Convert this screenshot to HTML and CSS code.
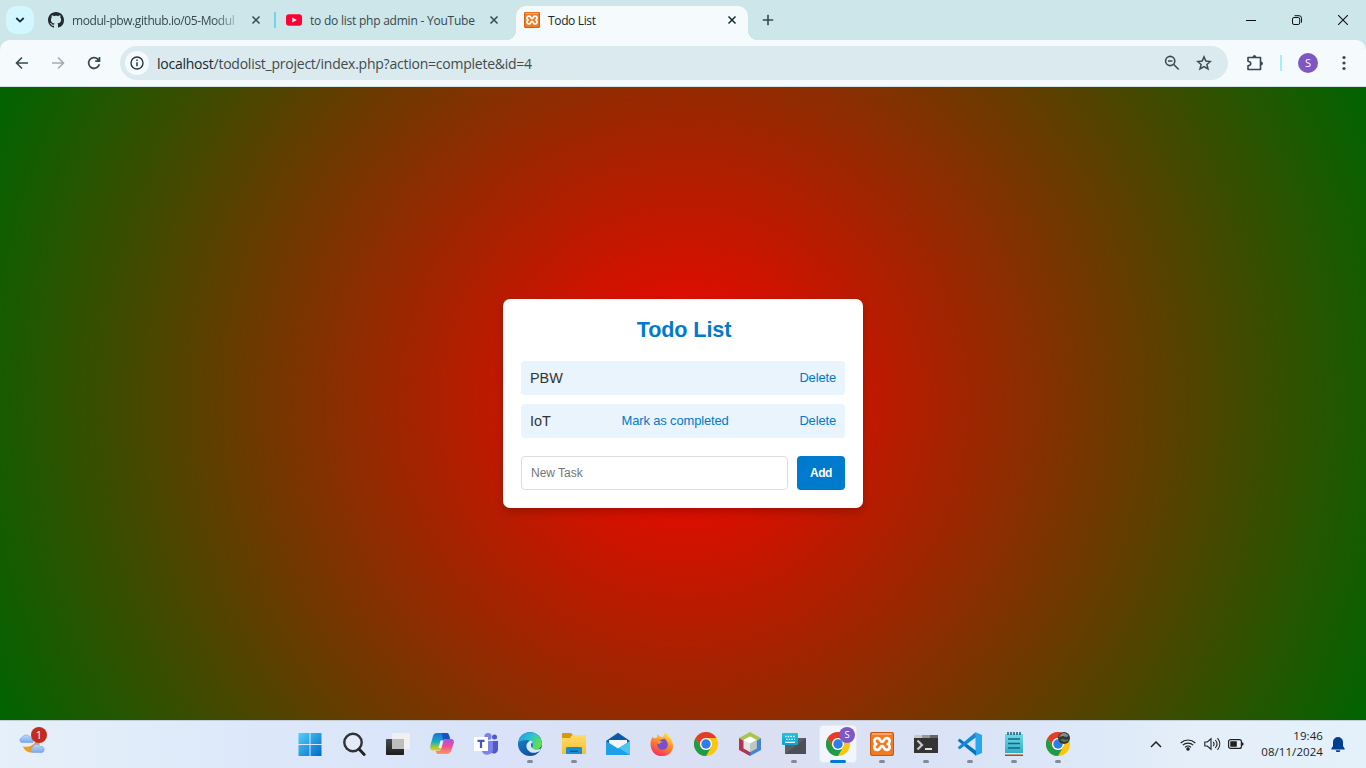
FILE: index.html
```html
<!DOCTYPE html>
<html lang="en">
<head>
<meta charset="utf-8">
<title>Todo List</title>
<link rel="stylesheet" href="styles.css">
</head>
<body>
<svg class="defs" width="0" height="0">
  <defs>
    <linearGradient id="win" x2="1" y2="1"><stop stop-color="#4fd0fb"/><stop offset="1" stop-color="#0069c8"/></linearGradient>
    <linearGradient id="edgeA" x2="1" y2=".4"><stop stop-color="#1b9de2"/><stop offset=".55" stop-color="#2bc3d2"/><stop offset="1" stop-color="#62df4b"/></linearGradient>
    <linearGradient id="edgeB" x2=".6" y2="1"><stop stop-color="#1d86d6"/><stop offset="1" stop-color="#0f4f9c"/></linearGradient>
    <linearGradient id="folder" x2="0" y2="1"><stop stop-color="#ffdc68"/><stop offset="1" stop-color="#f9bd30"/></linearGradient>
    <linearGradient id="fox" x1=".8" x2=".3" y2="1"><stop stop-color="#fff044"/><stop offset=".45" stop-color="#ff9128"/><stop offset="1" stop-color="#f52b62"/></linearGradient>
    <linearGradient id="copA" x2="0" y2="1"><stop stop-color="#1674de"/><stop offset=".5" stop-color="#19aac4"/><stop offset=".78" stop-color="#8fcb45"/><stop offset="1" stop-color="#f3c321"/></linearGradient>
    <linearGradient id="copB" x2="0" y2="1"><stop stop-color="#a650e5"/><stop offset=".5" stop-color="#ee5193"/><stop offset="1" stop-color="#ff9a5c"/></linearGradient>
    <linearGradient id="darkg" x2="0" y2="1"><stop stop-color="#4b4b4b"/><stop offset="1" stop-color="#1c1c1c"/></linearGradient>
    <linearGradient id="kb" x2="0" y2="1"><stop stop-color="#1fc4dc"/><stop offset="1" stop-color="#0aa2cf"/></linearGradient>
    <linearGradient id="cloud" x2="0" y2="1"><stop stop-color="#b9dcff"/><stop offset="1" stop-color="#7ba8ee"/></linearGradient>
    <linearGradient id="note" x2="0" y2="1"><stop stop-color="#6fd9e8"/><stop offset="1" stop-color="#31aecb"/></linearGradient>
    <symbol id="chrome" viewBox="0 0 24 24">
      <circle cx="12" cy="12" r="12" fill="#fdc50b"/>
      <path d="M1.600 6A12 12 0 0 1 22.400 6H12a6 6 0 0 0-5.200 9z" fill="#e33b2e"/>
      <path d="M1.600 6A12 12 0 0 0 12 24l5.200-9a6 6 0 0 1-10.400 0z" fill="#1f9a48"/>
      <circle cx="12" cy="12" r="6" fill="#fff"/><circle cx="12" cy="12" r="4.700" fill="#2b7cec"/>
    </symbol>
    <symbol id="xampp" viewBox="0 0 24 24">
      <rect width="24" height="24" rx="2.200" fill="#c9570f"/><rect x="1" y="1" width="22" height="22" rx="2" fill="#f27a20"/><path d="M2 1h20v2H2z" fill="#f7a566"/>
      <path d="M8.200 6.300C4.500 5.300 3 9.500 6 12c-3 2.500-1.500 6.700 2.200 5.700 2.200-.6 1.600-3.500 3.800-3.500s1.600 2.900 3.800 3.500C19.500 18.700 21 14.500 18 12c3-2.500 1.500-6.700-2.200-5.700-2.200.6-1.600 3.500-3.800 3.500s-1.600-2.900-3.800-3.500z" fill="none" stroke="#fff" stroke-width="2.700"/>
    </symbol>
    <symbol id="x" viewBox="0 0 10 10"><path d="M1.500 1.500l7 7M8.500 1.500l-7 7" stroke="currentColor" stroke-width="1.500"/></symbol>
  </defs>
</svg>

<div class="tabstrip">
  <div class="tabsearch"><svg width="10" height="6" viewBox="0 0 10 6"><path d="M1.300 1L5 4.600 8.700 1" fill="none" stroke="#15292e" stroke-width="1.800"/></svg></div>
  <div class="tab tab-github">
    <svg class="favicon" viewBox="0 0 16 16"><path fill="#1f2b30" d="M8 0C3.580 0 0 3.580 0 8c0 3.540 2.290 6.530 5.470 7.590.4.070.55-.17.55-.38 0-.19-.01-.82-.01-1.490-2.010.37-2.530-.49-2.690-.94-.09-.23-.48-.94-.82-1.130-.28-.15-.68-.52-.01-.53.63-.01 1.080.58 1.230.82.72 1.210 1.870.87 2.330.66.07-.52.28-.87.51-1.070-1.780-.2-3.640-.89-3.640-3.950 0-.87.31-1.590.82-2.150-.08-.2-.36-1.020.08-2.120 0 0 .67-.21 2.200.82.64-.18 1.320-.27 2-.27s1.360.09 2 .27c1.530-1.040 2.200-.82 2.200-.82.44 1.100.16 1.920.08 2.120.51.56.82 1.270.82 2.150 0 3.070-1.870 3.750-3.650 3.950.29.25.54.73.54 1.480 0 1.070-.01 1.930-.01 2.200 0 .21.15.46.55.38A8.010 8.010 0 0 0 16 8c0-4.420-3.580-8-8-8z"/></svg>
    <span class="tab-title t-github">modul-pbw.github.io/05-Modul</span>
    <svg class="close"><use href="#x"/></svg>
  </div>
  <div class="divider"></div>
  <div class="tab tab-youtube">
    <svg class="favicon" viewBox="0 0 16 16"><rect y="2.200" width="16" height="11.600" rx="3" fill="#ff0033"/><path d="M6.300 5.500v5L10.800 8z" fill="#fff"/></svg>
    <span class="tab-title t-youtube">to do list php admin - YouTube</span>
    <svg class="close"><use href="#x"/></svg>
  </div>
  <div class="tab tab-active">
    <svg class="favicon"><use href="#xampp"/></svg>
    <span class="tab-title t-active">Todo List</span>
    <svg class="close"><use href="#x"/></svg>
  </div>
  <svg class="newtab" viewBox="0 0 12 12"><path d="M6 .8v10.400M.8 6h10.400" stroke="#36494d" stroke-width="1.600"/></svg>
  <div class="winctl">
    <svg width="10" height="10"><path d="M0 5.500h10" stroke="#111"/></svg>
    <svg width="10" height="10" fill="none" stroke="#111"><rect x=".5" y="2.500" width="7.200" height="7" rx="1.500"/><path d="M2.500.7H7a2.500 2.500 0 0 1 2.500 2.500v4.500"/></svg>
    <svg width="10" height="10"><path d="M0 0l10 10M10 0L0 10" stroke="#111" stroke-width="1.100"/></svg>
  </div>
</div>

<div class="toolbar">
  <svg class="nav" viewBox="0 0 14 14"><path d="M13 7H1.800M7 1.500L1.500 7 7 12.500" fill="none" stroke="#36494d" stroke-width="1.600"/></svg>
  <svg class="nav" viewBox="0 0 14 14"><path d="M1 7h11.200M7 1.500L12.500 7 7 12.500" fill="none" stroke="#a0aeb1" stroke-width="1.600"/></svg>
  <svg class="nav" viewBox="0 0 14 14"><path d="M12.300 8.200A5.400 5.400 0 1 1 11 3.300l1.300 1.400M12.500 1v4.200H8.200" fill="none" stroke="#36494d" stroke-width="1.700"/></svg>
  <div class="omnibox">
    <div class="info"><svg width="14" height="14" viewBox="0 0 14 14"><circle cx="7" cy="7" r="6" fill="none" stroke="#2c373a" stroke-width="1.400"/><path d="M7 6.200v4M7 3.500v1.500" stroke="#2c373a" stroke-width="1.500"/></svg></div>
    <span class="url"><b>localhost</b>/todolist_project/index.php?action=complete&amp;id=4</span>
    <svg class="mag" viewBox="0 0 16 16" fill="none" stroke="#3f4b4f" stroke-width="1.600"><circle cx="6.200" cy="6" r="4.600"/><path d="M9.500 9.300l5.200 5.200M4 6h4.400"/></svg>
    <svg class="star" viewBox="0 0 16 16"><path d="M8 1.900l1.800 4.200 4.600.4-3.500 3 1.100 4.500L8 11.600 4 14l1.100-4.500-3.500-3 4.600-.4z" fill="none" stroke="#3f4b4f" stroke-width="1.500"/></svg>
  </div>
  <svg class="puzzle" viewBox="0 0 18 18"><path d="M2 3.500h12.500v12H2v-3.700c3.700-.6 3.700-4 0-4.600z" fill="none" stroke="#36494d" stroke-width="1.600" stroke-linejoin="round"/><path d="M6.400 3.500a2 2.500 0 0 1 4 0M14.500 7.500a2.500 2 0 0 1 0 4" fill="#36494d"/></svg>
  <div class="sep"></div>
  <div class="avatar">S</div>
  <svg class="dots" viewBox="0 0 4 16" fill="#36494d"><circle cx="2" cy="2.500" r="1.600"/><circle cx="2" cy="8" r="1.600"/><circle cx="2" cy="13.500" r="1.600"/></svg>
</div>

<main class="page">
  <section class="card">
    <h1>Todo List</h1>
    <ul>
      <li><span>PBW</span><a>Delete</a></li>
      <li><span>IoT</span><a class="complete">Mark as completed</a><a>Delete</a></li>
    </ul>
    <form><input type="text" placeholder="New Task"><button type="button">Add</button></form>
  </section>
</main>

<footer class="taskbar">
  <div class="weather">
    <svg width="28" height="28" viewBox="0 0 28 28"><path d="M20 5c4 6 1 15.500-6 16.500-4 .5-8-2.500-9-6C11 17 18 14 20 5z" fill="#f79a17"/><path d="M3.500 11.500a2.600 2.600 0 0 1 .6-5A4.500 4.500 0 0 1 11 5l4 3v3.500z" fill="url(#cloud)" stroke="#76a1df" stroke-width=".6"/><path d="M14.500 21.500a2.800 2.800 0 0 1 0-5.200 4 4 0 0 1 7.500-.8 3 3 0 0 1 2 6z" fill="url(#cloud)" stroke="#7da4e0" stroke-width=".6"/></svg>
    <span class="badge">1</span>
  </div>
  <div class="apps">
    <div class="app"><svg viewBox="0 0 24 24"><path d="M.5 1h11v11H.5zM12.500 1h11v11h-11zM.5 13h11v11H.5zM12.500 13h11v11h-11z" fill="url(#win)"/></svg></div>
    <div class="app"><svg viewBox="0 0 24 24"><circle cx="11" cy="10.500" r="8.700" fill="#e4eafa" stroke="#303235" stroke-width="2.400"/><path d="M17 17l5.200 5.500" stroke="#222" stroke-width="2.800" stroke-linecap="round"/></svg></div>
    <div class="app"><svg viewBox="0 0 24 24"><rect y="7" width="18" height="16" rx=".7" fill="url(#darkg)"/><rect x="6" y="1" width="18" height="16" rx=".7" fill="#f0f0f0"/><path d="M6 7h12v10H6z" fill="#bdbdbd"/></svg></div>
    <div class="app"><svg viewBox="0 0 24 24"><path d="M7 1h9.500c1.500 0 2 .8 2.600 2.600L20 7h-4c-2 0-2.700 1-3.300 3l-1.700 6c-.6 2-1.500 2.500-3 2.500H3C.5 18.500-.3 16 .4 13.300L3 4c.6-2 1.800-3 4-3z" fill="url(#copA)"/><path d="M17 22H8c-1.200 0-1.800-1-2.300-3H8c2 0 2.800-1 3.300-3L13 10c.6-2 1.500-3 3-3h5c2.500 0 3.300 2 2.600 4.700L21 19c-.6 2-2 3-4 3z" fill="url(#copB)"/><path d="M12 1h4.500c1.500 0 2 .8 2.600 2.600L20 7h-4c-2 0-2.400.5-3 2z" fill="#1551c4"/><path d="M10.500 8.500h2.800l-2 7.500H8.500z" fill="#e9effb"/></svg></div>
    <div class="app"><svg viewBox="0 0 24 24"><circle cx="14" cy="4.500" r="3.600" fill="#7b83eb"/><circle cx="20.500" cy="5" r="2.500" fill="#5059c9"/><path d="M16 9h8v8.500a4 4 0 0 1-6 3.500z" fill="#5059c9"/><path d="M8 9h11v8a5.800 5.800 0 0 1-11 2.500z" fill="#7b83eb"/><rect y="5" width="14" height="14" fill="#fff"/><path d="M3.500 8.900h7M7 8.900v7" stroke="#4b53bc" stroke-width="2.200"/></svg></div>
    <div class="app run"><svg viewBox="0 0 24 24"><circle cx="12" cy="12" r="12" fill="url(#edgeB)"/><path d="M.2 10.500A12 12 0 0 1 24 11c0 4-3 6.500-6.500 6.500-3 0-4.200-1.200-3.300-2.400C16 12.500 13.500 8 9 8c-4 0-7 1-8.800 2.500z" fill="url(#edgeA)"/><path d="M12 8.700c-3.500 1.500-5 6-2 9.500 2.700 3.200 7.500 3.500 12 .5l1-2.500c-4.500 2.600-10 1-10-3 0-2 1-3 1.800-3.200-.7-.8-1.800-1.300-2.800-1.300z" fill="#dbe6f8"/></svg></div>
    <div class="app run"><svg viewBox="0 0 24 24"><path d="M0 2c0-1 .5-1 1-1h8l2 2h12.500v5H0z" fill="#d79b0a"/><path d="M0 6h8l2.500-3H23c.7 0 1 .3 1 1v18H0z" fill="url(#folder)"/><path d="M4 22v-5.500c0-1 .5-1.500 1.500-1.500h13c1 0 1.500.5 1.500 1.500V22z" fill="#168fd2"/><path d="M8 18.500h8V20H8z" fill="#0761a5"/></svg></div>
    <div class="app"><svg viewBox="0 0 24 24"><path d="M0 9L12 .8 24 9v4H0z" fill="#0c59a8"/><path d="M3 8h18v8H3z" fill="#f2f4f7"/><path d="M0 9l12 7.500L24 9v14H0z" fill="#1fa0e5"/><path d="M24 9v14L13 16z" fill="#4bc6f3"/></svg></div>
    <div class="app"><svg viewBox="0 0 24 24"><path d="M2.600 5c.7.300 1.300.8 1.600 1.600l3-1C7 4 7 3 7.500 2c1 2 3 3 5.500 3l2-4.500c2 1 3.600 3 4 5l1-.5c2.500 4 4 8.500 2.500 12.500A11.500 11.500 0 0 1 1.400 17C-.2 13 .6 8 2.600 5z" fill="url(#fox)"/><circle cx="12.500" cy="12.500" r="5.300" fill="#7550d4"/><path d="M6.500 9c2-1 4.200-.6 6 1.200-2.500.2-2.800 1.600-4.300 2z" fill="#ff9826"/><path d="M12 8c2 .5 4 1 5 4 .4-3-1-5-3-5.600z" fill="#a842c2"/></svg></div>
    <div class="app"><svg><use href="#chrome"/></svg></div>
    <div class="app"><svg viewBox="0 0 24 24"><path d="M12 0l11 6-5 3-6-3-6 3-5-3z" fill="#a8c64a"/><path d="M1 6l5 3v7l6 3v5L1 18z" fill="#b13454"/><path d="M23 6l-5 3v7l-6 3v5l11-6z" fill="#4784cf"/><path d="M12 4.500l6.500 3.500v8.500L12 20l-6.500-3.500V8z" fill="#e2e7e3"/><path d="M12 4.500l6.500 3.500L12 11.500 5.500 8z" fill="#fff"/><path d="M12 11.500l6.500-3.500v8.500L12 20z" fill="#bdc8c2"/></svg></div>
    <div class="app run"><svg viewBox="0 0 24 24"><path d="M3 6h21v16H3z" fill="#5c6065"/><path d="M24 6v16H3z" fill="#3c4044" opacity=".5"/><rect y="1" width="16" height="12" rx="1" fill="url(#kb)"/><path d="M3 4.500h10M4 7.300h9" stroke="#fff" stroke-width="1.300" stroke-dasharray="1.500 1.200"/><path d="M3 10.300h10" stroke="#fff" stroke-width="1.200"/></svg></div>
    <div class="app current"><svg><use href="#chrome"/></svg><span class="profile">S</span></div>
    <div class="app run"><svg><use href="#xampp"/></svg></div>
    <div class="app run"><svg viewBox="0 0 24 24"><path d="M0 3h24v17.500a.5.500 0 0 1-.5.500H.5a.5.500 0 0 1-.5-.5z" fill="#343434"/><path d="M0 3h8v3H0z" fill="#c8c8c8"/><path d="M8 3h8v3H8z" fill="#979797"/><path d="M16 3h8v3h-8z" fill="#666"/><path d="M3.500 8.500L8 13l-4.500 4.500" fill="none" stroke="#c8c8c8" stroke-width="2.200"/><path d="M11 17h7" stroke="#fff" stroke-width="1.700"/></svg></div>
    <div class="app run"><svg viewBox="0 0 24 24"><path d="M17.500.3L24 3v18l-6.500 2.700z" fill="#27a5ed"/><path d="M2.200 7L18 18.800v4.900L.4 9.200c-.5-.5-.4-1 0-1.400l.8-.8c.3-.3.700-.3 1 0z" fill="#0673bf"/><path d="M17.500.3L18 5.200 2.200 17c-.3.300-.7.300-1 0l-.8-.8c-.4-.4-.5-.9 0-1.400z" fill="#128ad6"/></svg></div>
    <div class="app run"><svg viewBox="0 0 24 24"><path d="M3 22h18v2H3z" fill="#ae4c0c"/><path d="M3 20h18v2.500H3z" fill="#e9e2da"/><path d="M3 2h18v19H3z" fill="url(#note)"/><path d="M6 0v3M9 0v3M12 0v3M15 0v3M18 0v3" stroke="#155b71" stroke-width="1.500"/><path d="M6 7h12M6 11.500h12M6 16h12" stroke="#146879" stroke-width="1.500"/></svg></div>
    <div class="app run"><svg><use href="#chrome"/></svg><svg class="photo" viewBox="0 0 12 12"><circle cx="6" cy="6" r="6" fill="#303b35"/><path d="M1 5c2-5 7-5 9.500-1L8 5 5 4z" fill="#808b91"/><path d="M2 8l3-1 3 1 2-1v2l-4 1z" fill="#657354"/></svg></div>
  </div>
  <div class="tray">
    <svg class="chev" width="12" height="7" viewBox="0 0 12 7"><path d="M1 6l5-5 5 5" fill="none" stroke="#222" stroke-width="1.500"/></svg>
    <svg class="wifi" width="16" height="13" viewBox="0 0 16 13" fill="none" stroke="#202020" stroke-width="1.100"><path d="M.7 5a10.500 10.500 0 0 1 14.600 0M2.800 7.200a7.500 7.500 0 0 1 10.400 0M5 9.300a4.300 4.300 0 0 1 6 0"/><circle cx="8" cy="11" r="1.200" fill="#202020"/></svg>
    <svg class="sound" width="17" height="14" viewBox="0 0 17 14" fill="none" stroke="#202020" stroke-width="1.100"><path d="M.8 5h2.500L7 1.800v10.400L3.300 9H.8zM9.200 4.800c1.100 1.300 1.100 3.100 0 4.400M11.300 3c2.100 2.400 2.100 5.600 0 8M13.500 1.200c3 3.500 3 8.100 0 11.600"/></svg>
    <svg class="battery" width="16" height="10" viewBox="0 0 16 10"><rect x=".6" y=".6" width="12.800" height="8.800" rx="2" fill="none" stroke="#202020" stroke-width="1.200"/><path d="M2.300 2.300h6.500v5.400H2.300zM14 3.500h1.200q.8 1.500 0 3H14z" fill="#202020"/></svg>
    <div class="clock"><span>19:46</span><span>08/11/2024</span></div>
    <svg class="bell" width="14" height="15" viewBox="0 0 14 15"><path d="M7 0a5 5 0 0 1 5 5v4l1.600 2.500c.3.600 0 1-.6 1H1c-.6 0-.9-.4-.6-1L2 9V5a5 5 0 0 1 5-5zM4.800 13.200h4.400a2.200 2.200 0 0 1-4.400 0z" fill="#003e92"/></svg>
  </div>
</footer>
</body>
</html>
```
FILE: styles.css
```css
* { box-sizing: border-box; }
body {
  margin: 0;
  width: 1366px;
  height: 768px;
  overflow: hidden;
  display: flex;
  flex-direction: column;
  font-family: "Open Sans", "Noto Sans", sans-serif;
  background: #cde6ea;
}
svg { flex: none; display: block; }
.defs { position: absolute; }

/* Tabs */
.tabstrip { height: 40px; flex: none; display: flex; align-items: center; padding-left: 6px; color: #36494d; }
.tabsearch { width: 28px; height: 28px; border-radius: 10px; background: #d3f7ff; display: flex; align-items: center; justify-content: center; }
.tab { display: flex; align-items: center; height: 34px; font-size: 12px; }
.favicon { width: 16px; height: 16px; }
.tab-title { flex: 1; margin-left: 8px; padding-top: 1px; white-space: nowrap; line-height: 18px; letter-spacing: -.23px; }
.t-active { letter-spacing: -.35px; }
.close { width: 10px; height: 10px; }
.tab-github { width: 213px; margin-left: 14px; }
.t-github { letter-spacing: -.42px; margin-right: 10px; -webkit-mask-image: linear-gradient(90deg, #000 84%, rgba(0,0,0,.1)); mask-image: linear-gradient(90deg, #000 84%, rgba(0,0,0,.1)); }
.divider { width: 2px; height: 16px; margin: 0 10px 0 13px; background: #74d5e6; }
.tab-youtube { width: 213px; }
.tab-active {
  position: relative;
  width: 232px;
  margin: 6px 0 0 17px;
  padding: 0 11px 6px 8px;
  background: #f5fafd;
  border-radius: 10px 10px 0 0;
  color: #15292e;
}
.tab-active::before, .tab-active::after { content: ""; position: absolute; bottom: 0; width: 10px; height: 10px; }
.tab-active::before { left: -10px; background: radial-gradient(circle at 0 0, transparent 10px, #f5fafd 10.500px); }
.tab-active::after { right: -10px; background: radial-gradient(circle at 100% 0, transparent 10px, #f5fafd 10.500px); }
.newtab { width: 12px; height: 12px; margin-left: 14px; }
.winctl { display: flex; gap: 36px; margin-left: auto; margin-right: 18px; }

/* Toolbar */
.toolbar { height: 47px; flex: none; display: flex; align-items: center; padding: 0 20px 0 15px; background: #f5fafd; border-radius: 10px 10px 0 0; border-bottom: 1px solid #d4e2e7; }
.nav { width: 14px; height: 14px; margin-right: 22px; }
.nav:nth-child(3) { margin-right: 18px; }
.omnibox { width: 1108px; height: 34px; border-radius: 17px; background: #dbeaee; display: flex; align-items: center; padding: 0 16px 0 5px; margin-left: 1px; }
.info { width: 24px; height: 24px; border-radius: 50%; background: #f5fafd; display: flex; align-items: center; justify-content: center; }
.url { margin-left: 8px; padding-top: 1px; font-size: 14px; line-height: 20px; color: #414a4d; white-space: nowrap; letter-spacing: -.24px; }
.url b { font-weight: 400; color: #15292e; }
.mag { width: 16px; height: 16px; margin-left: auto; margin-right: 16px; }
.star { width: 16px; height: 16px; }
.puzzle { width: 18px; height: 18px; margin-left: 18px; }
.sep { width: 2px; height: 16px; margin: 0 16px; background: #a2efff; }
.avatar { width: 20px; height: 20px; border-radius: 50%; background: #7e57c2; color: #fff; font-size: 11px; line-height: 20px; text-align: center; }
.dots { width: 4px; height: 16px; margin-left: auto; }

/* Page */
.page { flex: 1; display: flex; align-items: center; justify-content: center; background: radial-gradient(circle, #f00, #006400); font-family: "Liberation Sans", Arial, sans-serif; }
.card { width: 360px; height: 209px; padding: 18px; background: #fff; border-radius: 7px; box-shadow: 0 4px 8px rgba(0,0,0,.2); }
.card h1 { margin: 0 0 18px 2px; font-size: 21.600px; line-height: 26px; letter-spacing: -.1px; text-align: center; color: #007acc; }
.card ul { margin: 0 0 18px; padding: 0; list-style: none; display: flex; flex-direction: column; gap: 9px; }
.card li { height: 34px; padding: 0 9px; background: #e9f4fd; border-radius: 4px; display: flex; align-items: center; justify-content: space-between; font-size: 14.400px; color: #333; }
.card a { font-size: 12.960px; letter-spacing: -.14px; color: #007acc; margin-bottom: 1px; }
.card form { display: flex; gap: 9px; }
.card input { width: 267px; height: 34px; padding: 0 9px; border: 1px solid #ddd; border-radius: 4px; font: 12px "Liberation Sans", Arial, sans-serif; }
.card button { width: 48px; height: 34px; border: 0; padding: 0; border-radius: 4px; background: #007acc; color: #fff; font: bold 12px "Liberation Sans", Arial, sans-serif; letter-spacing: -.5px; }

/* Taskbar */
.taskbar { height: 48px; flex: none; display: flex; box-shadow: inset 0 1px #c3ccd9; background: linear-gradient(90deg, #e5f0f9 0, #dce8fa 20%, #d9e2f8 38%, #dae0f2 56%, #dae5f8 75%, #e4eff9 88%, #e5f1fa 100%); }
.weather { position: relative; width: 288px; padding: 11px 0 0 18px; }
.badge { position: absolute; left: 31px; top: 7px; width: 16px; height: 16px; border-radius: 50%; background: #c42b1c; color: #fff; font-size: 11px; line-height: 16px; text-align: center; }
.apps { display: flex; }
.app { position: relative; width: 44px; height: 48px; display: flex; align-items: center; justify-content: center; }
.app svg { width: 24px; height: 24px; }
.app:first-child svg { margin-left: -1px; }
.run::after, .current::after { content: ""; position: absolute; bottom: 5px; left: 19px; width: 6px; height: 3px; border-radius: 2px; background: #858b96; }
.current::before { content: ""; position: absolute; inset: 5px 3px 5px; border-radius: 4px; background: #f1f5fd; border: 1px solid #e4e9f4; }
.current svg { position: relative; }
.current::after { left: 14px; width: 16px; background: #0078d4; }
.profile { position: absolute; left: 23px; top: 7px; width: 16px; height: 16px; border-radius: 50%; background: #7e57c2; color: #fff; font-size: 9.500px; line-height: 16px; text-align: center; }
.app .photo { position: absolute; left: 22px; top: 12px; width: 12px; height: 12px; }
.tray { flex: 1; display: flex; align-items: center; padding-left: 70px; }
.wifi { margin-left: 18px; }
.sound { margin-left: 8px; }
.battery { margin-left: 7px; }
.clock { width: 79px; display: flex; flex-direction: column; align-items: flex-end; font-size: 11.500px; line-height: 16px; letter-spacing: .07px; color: #1c1c1c; white-space: nowrap; }
.bell { margin-left: 8px; }
```
